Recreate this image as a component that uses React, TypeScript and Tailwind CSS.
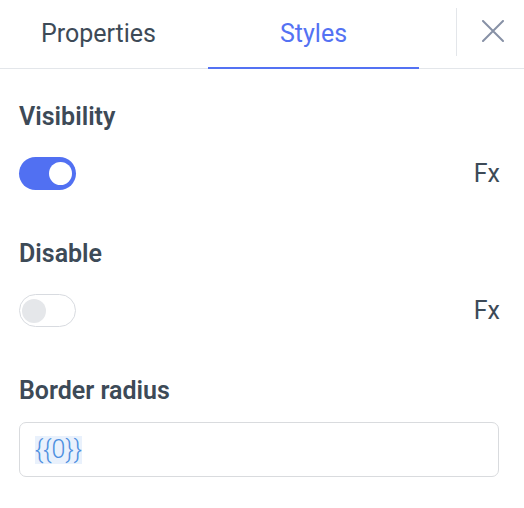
import { useState } from 'react'

function Toggle({ on }: { on: boolean }) {
  return (
    <div
      className={
        on
          ? 'w-[57px] h-[33px] rounded-full bg-[#5170f2] flex items-center justify-end px-[4px]'
          : 'w-[57px] h-[33px] rounded-full bg-white border border-[#d8dbe0] flex items-center px-[2px]'
      }
    >
      <div
        className={
          on
            ? 'w-[23px] h-[23px] rounded-full bg-white'
            : 'w-[24px] h-[24px] rounded-full bg-[#e5e7ea]'
        }
      />
    </div>
  )
}

function ToggleRow({ label, on }: { label: string; on: boolean }) {
  return (
    <div className="flex flex-col">
      <div className="h-[36px] leading-[36px] text-[25px] font-semibold text-[#3d4a57]">{label}</div>
      <div className="mt-[22px] flex items-center justify-between h-[33px]">
        <Toggle on={on} />
        <span className="text-[25px] text-[#3d4a57] pr-[5px] leading-none">Fx</span>
      </div>
    </div>
  )
}

export default function App() {
  const [tab] = useState('styles')
  return (
    <div className="w-[524px] h-[508px] bg-white font-['Roboto','Liberation_Sans',sans-serif] overflow-hidden">
      <div className="relative h-[69px] flex items-stretch border-b border-[#e3e6ea]">
        <div className="w-[197px] flex items-center justify-center text-[25px] text-[#3d4a57]">Properties</div>
        <div className="w-[11px]" />
        <div className="relative w-[211px] flex items-center justify-center text-[25px] text-[#5472f3]">
          Styles
          {tab === 'styles' && <div className="absolute left-0 right-0 bottom-[-1px] h-[2px] bg-[#5472f3]" />}
        </div>
        <div className="w-[37px]" />
        <div className="w-px mt-[8px] mb-[12px] bg-[#e3e6ea]" />
        <div className="flex-1 pl-[25px] pt-[20px]">
          <svg width="22" height="22" viewBox="0 0 22 22">
            <path d="M1 1L21 21M21 1L1 21" stroke="#8791a6" strokeWidth="2" strokeLinecap="round" />
          </svg>
        </div>
      </div>

      <div className="px-[19px] pt-[30px] flex flex-col">
        <ToggleRow label="Visibility" on={true} />
        <div className="h-[46px]" />
        <ToggleRow label="Disable" on={false} />
        <div className="h-[46px]" />
        <div className="h-[36px] leading-[36px] text-[25px] font-semibold text-[#3d4a57]">Border radius</div>
        <div className="mt-[13px] w-[480px] h-[55px] rounded-[7px] border border-[#d9dbde] flex items-center px-[15px]">
          <span className="bg-[#e9f1fc] text-[#4d8fe0] text-[25px] leading-[28px] font-light">{'{{0}}'}</span>
        </div>
      </div>
    </div>
  )
}
